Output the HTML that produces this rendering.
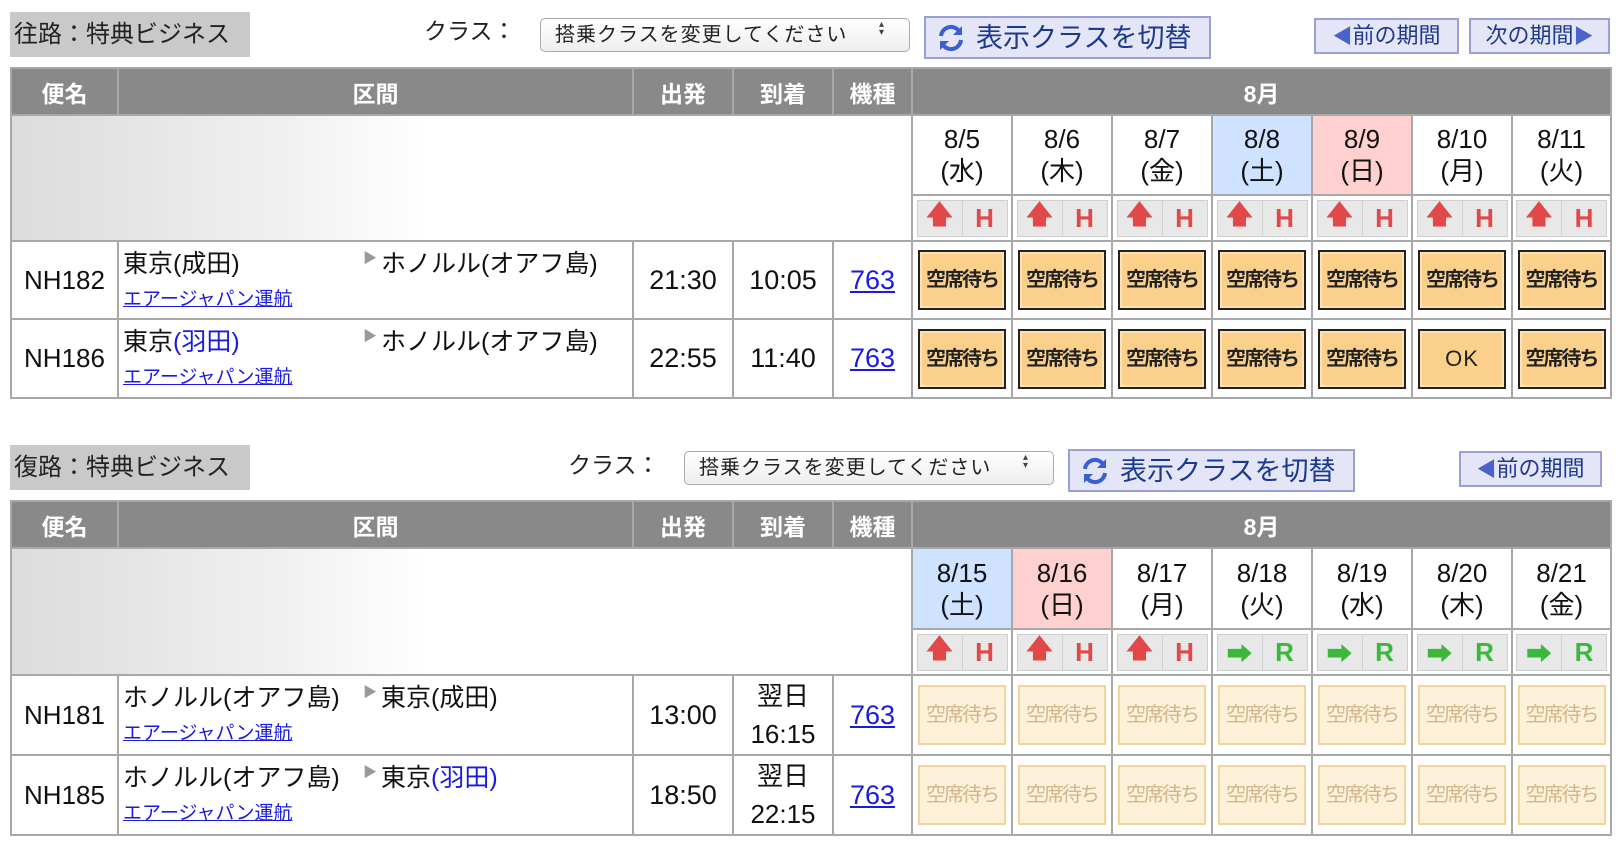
<!DOCTYPE html>
<html><head><meta charset="utf-8">
<style>
*{box-sizing:border-box;margin:0;padding:0}
body{width:1622px;height:848px;background:#fff;font-family:"Liberation Sans","Noto Sans CJK JP",sans-serif;color:#111;position:relative;overflow:hidden}
.abs{position:absolute}
.title{background:#c9c9c9;font-size:24px;line-height:45px;padding-left:4px;color:#222}
.lbl{font-size:23px;color:#222}
.sel{border:1px solid #aaa;border-radius:5px;background:linear-gradient(#fff,#eee);font-size:20px;line-height:32px;padding-left:14px;color:#222;letter-spacing:1px}
.sel:after{content:"▴▾";position:absolute;right:12px;top:0;font-size:10px;writing-mode:vertical-lr;letter-spacing:-3px;color:#444;line-height:32px}
.btn{background:#e4e6f8;border:2px solid #9aa0d6;color:#1c3a8c;font-size:27px;line-height:40px;display:flex;align-items:center}
.btn svg{margin:0 10px 0 10px}
.nav{background:#e4e6f8;border:2px solid #9aa0d6;color:#1c3a8c;font-size:22px;line-height:32px;text-align:center}
.nav b{font-size:20px;color:#4a63c8;font-weight:normal}
table{position:absolute;left:10px;border-collapse:collapse;table-layout:fixed}
td{border:2px solid #a8a8a8;padding:0;vertical-align:middle;text-align:center;position:relative}
tr.h td{background:#898989;color:#fff;font-weight:bold;font-size:23px;border-color:#a8a8a8}
.grad{background:linear-gradient(90deg,#dcdcdc 0%,#f0f0f0 30%,#fff 46%)}
.date{font-size:26px;line-height:32px}
.sat{background:#cfe2ff}.sun{background:#ffd0d0}
.ic{display:flex;margin:0 auto;width:91px;height:37px;background:#e8e8e8;border:1px solid #cfcfcf}
.ic span{flex:1;display:flex;align-items:center;justify-content:center;border-right:1px solid #d0d0d0;font-size:26px;font-weight:bold}
.ic span:last-child{border:none}
.r{color:#e24848}.g{color:#39b839}
.av{margin:0 auto;width:88px;height:60px;background:#fbd08a;border:2px solid #222;box-shadow:inset 0 0 0 2px #fde3b4;font-size:20px;line-height:56px;color:#222;font-weight:bold;letter-spacing:-2px}
.na{margin:0 auto;width:88px;height:60px;background:#fdf1d9;border:2px solid #f3d499;font-size:20px;line-height:56px;color:#d2b58a;letter-spacing:-2px}
.fn{font-size:26px}
.tm{font-size:27px}
.tm2{font-size:26px;line-height:38px}
a{color:#1a1ae0;text-decoration:underline}
.ty{font-size:27px}
.route{text-align:left}
.route .a{position:absolute;left:4px;top:2px;font-size:25px}
.route .b{position:absolute;left:244px;top:2px;font-size:25px}
.route .b i{font-style:normal;color:#999;font-size:14px;vertical-align:top;position:relative;top:4px;margin-right:4px}
.route .l{position:absolute;left:4px;top:42px;font-size:19px}
.blue{color:#1a1ae0}
</style></head><body>

<div class="abs title" style="left:10px;top:12px;width:240px;height:45px">往路：特典ビジネス</div>
<div class="abs lbl" style="left:424px;top:12px">クラス：</div>
<div class="abs sel" style="left:540px;top:18px;width:370px;height:34px">搭乗クラスを変更してください</div>
<div class="abs btn" style="left:924px;top:16px;width:287px;height:43px"><svg width="30" height="30" viewBox="0 0 30 30"><path d="M5 13a10 10 0 0 1 18-5" fill="none" stroke="#3a5fcf" stroke-width="4"/><path d="M26 3v9h-9z" fill="#3a5fcf"/><path d="M25 17a10 10 0 0 1-18 5" fill="none" stroke="#3a5fcf" stroke-width="4"/><path d="M4 27v-9h9z" fill="#3a5fcf"/></svg>表示クラスを切替</div>
<div class="abs nav" style="left:1314px;top:18px;width:145px;height:36px"><b>◀</b>前の期間</div>
<div class="abs nav" style="left:1469px;top:18px;width:141px;height:36px">次の期間<b>▶</b></div>

<table style="top:67px">
<colgroup><col style="width:107px"><col style="width:515px"><col style="width:100px"><col style="width:100px"><col style="width:79px"><col span="6" style="width:100px"><col style="width:99px"></colgroup>
<tr class="h" style="height:47px"><td>便名</td><td>区間</td><td>出発</td><td>到着</td><td>機種</td><td colspan="7">8月</td></tr>
<tr style="height:80px"><td colspan="5" rowspan="2" class="grad"></td>
<td class="date">8/5<br>(水)</td><td class="date">8/6<br>(木)</td><td class="date">8/7<br>(金)</td><td class="date sat">8/8<br>(土)</td><td class="date sun">8/9<br>(日)</td><td class="date">8/10<br>(月)</td><td class="date">8/11<br>(火)</td></tr>
<tr style="height:46px">
<td><div class="ic"><span class="r">🡅</span><span class="r">H</span></div></td><td><div class="ic"><span class="r">🡅</span><span class="r">H</span></div></td><td><div class="ic"><span class="r">🡅</span><span class="r">H</span></div></td><td><div class="ic"><span class="r">🡅</span><span class="r">H</span></div></td><td><div class="ic"><span class="r">🡅</span><span class="r">H</span></div></td><td><div class="ic"><span class="r">🡅</span><span class="r">H</span></div></td><td><div class="ic"><span class="r">🡅</span><span class="r">H</span></div></td></tr>
<tr style="height:78px"><td class="fn">NH182</td><td class="route"><span class="a">東京(成田)</span><span class="b"><i>▶</i>ホノルル(オアフ島)</span><a class="l">エアージャパン運航</a></td><td class="tm">21:30</td><td class="tm">10:05</td><td><a class="ty">763</a></td>
<td><div class="av">空席待ち</div></td><td><div class="av">空席待ち</div></td><td><div class="av">空席待ち</div></td><td><div class="av">空席待ち</div></td><td><div class="av">空席待ち</div></td><td><div class="av">空席待ち</div></td><td><div class="av">空席待ち</div></td></tr>
<tr style="height:79px"><td class="fn">NH186</td><td class="route"><span class="a">東京<span class="blue">(羽田)</span></span><span class="b"><i>▶</i>ホノルル(オアフ島)</span><a class="l">エアージャパン運航</a></td><td class="tm">22:55</td><td class="tm">11:40</td><td><a class="ty">763</a></td>
<td><div class="av">空席待ち</div></td><td><div class="av">空席待ち</div></td><td><div class="av">空席待ち</div></td><td><div class="av">空席待ち</div></td><td><div class="av">空席待ち</div></td><td><div class="av" style="font-weight:normal;font-size:22px;letter-spacing:1px">OK</div></td><td><div class="av">空席待ち</div></td></tr>
</table>

<div class="abs title" style="left:10px;top:445px;width:240px;height:45px">復路：特典ビジネス</div>
<div class="abs lbl" style="left:568px;top:446px">クラス：</div>
<div class="abs sel" style="left:684px;top:451px;width:370px;height:34px">搭乗クラスを変更してください</div>
<div class="abs btn" style="left:1068px;top:449px;width:287px;height:43px"><svg width="30" height="30" viewBox="0 0 30 30"><path d="M5 13a10 10 0 0 1 18-5" fill="none" stroke="#3a5fcf" stroke-width="4"/><path d="M26 3v9h-9z" fill="#3a5fcf"/><path d="M25 17a10 10 0 0 1-18 5" fill="none" stroke="#3a5fcf" stroke-width="4"/><path d="M4 27v-9h9z" fill="#3a5fcf"/></svg>表示クラスを切替</div>
<div class="abs nav" style="left:1459px;top:451px;width:143px;height:36px"><b>◀</b>前の期間</div>

<table style="top:500px">
<colgroup><col style="width:107px"><col style="width:515px"><col style="width:100px"><col style="width:100px"><col style="width:79px"><col span="6" style="width:100px"><col style="width:99px"></colgroup>
<tr class="h" style="height:47px"><td>便名</td><td>区間</td><td>出発</td><td>到着</td><td>機種</td><td colspan="7">8月</td></tr>
<tr style="height:81px"><td colspan="5" rowspan="2" class="grad"></td>
<td class="date sat">8/15<br>(土)</td><td class="date sun">8/16<br>(日)</td><td class="date">8/17<br>(月)</td><td class="date">8/18<br>(火)</td><td class="date">8/19<br>(水)</td><td class="date">8/20<br>(木)</td><td class="date">8/21<br>(金)</td></tr>
<tr style="height:46px">
<td><div class="ic"><span class="r">🡅</span><span class="r">H</span></div></td><td><div class="ic"><span class="r">🡅</span><span class="r">H</span></div></td><td><div class="ic"><span class="r">🡅</span><span class="r">H</span></div></td><td><div class="ic"><span class="g">➡</span><span class="g">R</span></div></td><td><div class="ic"><span class="g">➡</span><span class="g">R</span></div></td><td><div class="ic"><span class="g">➡</span><span class="g">R</span></div></td><td><div class="ic"><span class="g">➡</span><span class="g">R</span></div></td></tr>
<tr style="height:80px"><td class="fn">NH181</td><td class="route"><span class="a">ホノルル(オアフ島)</span><span class="b"><i>▶</i>東京(成田)</span><a class="l">エアージャパン運航</a></td><td class="tm">13:00</td><td class="tm2">翌日<br>16:15</td><td><a class="ty">763</a></td>
<td><div class="na">空席待ち</div></td><td><div class="na">空席待ち</div></td><td><div class="na">空席待ち</div></td><td><div class="na">空席待ち</div></td><td><div class="na">空席待ち</div></td><td><div class="na">空席待ち</div></td><td><div class="na">空席待ち</div></td></tr>
<tr style="height:80px"><td class="fn">NH185</td><td class="route"><span class="a">ホノルル(オアフ島)</span><span class="b"><i>▶</i>東京<span class="blue">(羽田)</span></span><a class="l">エアージャパン運航</a></td><td class="tm">18:50</td><td class="tm2">翌日<br>22:15</td><td><a class="ty">763</a></td>
<td><div class="na">空席待ち</div></td><td><div class="na">空席待ち</div></td><td><div class="na">空席待ち</div></td><td><div class="na">空席待ち</div></td><td><div class="na">空席待ち</div></td><td><div class="na">空席待ち</div></td><td><div class="na">空席待ち</div></td></tr>
</table>
</body></html>
